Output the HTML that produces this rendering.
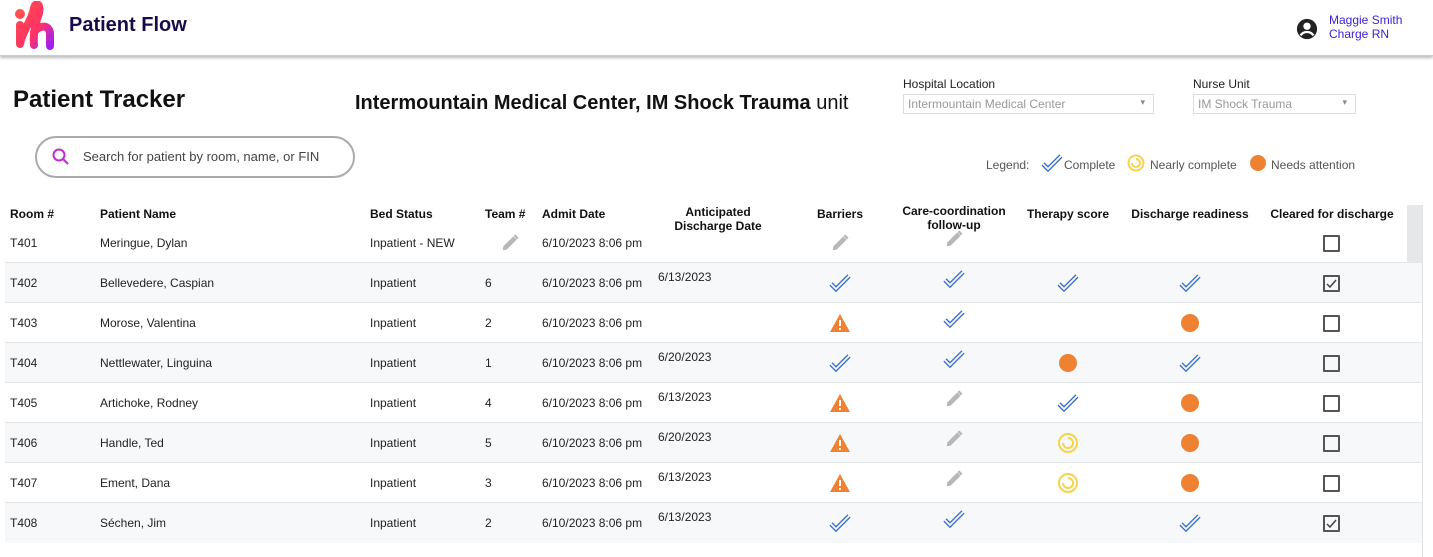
<!DOCTYPE html>
<html><head><meta charset="utf-8"><style>
*{margin:0;padding:0;box-sizing:border-box}
body{width:1433px;height:557px;background:#fff;font-family:"Liberation Sans",Arial,sans-serif;position:relative;overflow:hidden;color:#111}
.a{position:absolute;white-space:nowrap}
.hdr{position:absolute;left:0;top:0;width:1433px;height:56px;background:#fff;border-bottom:1px solid #ccc;box-shadow:0 2px 3px #bbb}
.th{font-size:12px;font-weight:bold;color:#111}
.row{position:absolute;left:5px;width:1417px;height:40px;border-top:1px solid #e3e5e8}
.sh{background:#f7f8fa}
.c{font-size:12px;color:#222}
.sel{position:absolute;height:20px;border:1px solid #ddd;font-size:12px;color:#999;padding:2px 4px}
.sel:after{content:"▾";position:absolute;right:8px;top:2px;font-size:9px;color:#888}
.cb{position:absolute;width:17px;height:17px;border:2px solid #555;border-radius:1px}
</style></head><body>
<div class="hdr"></div>
<svg class="a" style="left:12px;top:1px" width="44" height="50" viewBox="0 0 44 50">
<defs><linearGradient id="g" x1="0" y1="0" x2="1" y2="1"><stop offset="0" stop-color="#ff4a4a"/><stop offset=".6" stop-color="#ff3366"/><stop offset="1" stop-color="#a020f0"/></linearGradient></defs>
<circle cx="8" cy="13" r="5" fill="#ff5050"/>
<path d="M8 24 V43 M8 43 C10 30 20 20 22 7 C24 -1 31 4 25 18 C23 26 21 34 22 44 M22 31 C28 23 38 24 38 33 V45" stroke="url(#g)" stroke-width="8" fill="none" stroke-linecap="round"/>
</svg>
<div class="a" style="left:69px;top:14px;font-size:20px;font-weight:bold;color:#1a0a4a">Patient Flow</div>
<svg class="a" style="left:1296px;top:18px" width="22" height="22" viewBox="0 0 24 24"><circle cx="12" cy="12" r="11" fill="#222"/><circle cx="12" cy="9" r="4" fill="#fff"/><path d="M5 19 C8 14 16 14 19 19" stroke="#fff" stroke-width="2.5" fill="none"/></svg>
<div class="a" style="left:1329px;top:13px;font-size:12px;color:#3a1fd6;line-height:14px">Maggie Smith<br>Charge RN</div>

<div class="a" style="left:13px;top:86px;font-size:24px;font-weight:bold">Patient Tracker</div>
<div class="a" style="left:355px;top:92px;font-size:20px"><b>Intermountain Medical Center, IM Shock Trauma</b> unit</div>
<div class="a" style="left:903px;top:77px;font-size:12px;color:#222">Hospital Location</div>
<div class="sel" style="left:903px;top:94px;width:251px">Intermountain Medical Center</div>
<div class="a" style="left:1193px;top:77px;font-size:12px;color:#222">Nurse Unit</div>
<div class="sel" style="left:1193px;top:94px;width:163px">IM Shock Trauma</div>

<div class="a" style="left:35px;top:136px;width:320px;height:42px;border:2px solid #aaa;border-radius:21px"></div>
<svg class="a" style="left:52px;top:148px" width="18" height="18" viewBox="0 0 18 18"><circle cx="7" cy="7" r="5.5" stroke="#c02ad0" stroke-width="2" fill="none"/><path d="M11 11 L16 16" stroke="#c02ad0" stroke-width="2"/></svg>
<div class="a" style="left:83px;top:149px;font-size:13px;color:#444">Search for patient by room, name, or FIN</div>

<div class="a" style="left:986px;top:158px;font-size:12px;color:#555">Legend:</div>
<svg class="a" style="left:1041px;top:154px" width="22" height="18" viewBox="0 0 22 18"><path d="M2 10 L7 15 L20 2" stroke="#3a6fd0" stroke-width="4.5" fill="none"/><path d="M2 10 L7 15 L20 2" stroke="#fff" stroke-width="1.8" fill="none"/></svg>
<div class="a" style="left:1064px;top:158px;font-size:12px;color:#555">Complete</div>
<svg class="a" style="left:1127px;top:154px" width="18" height="18" viewBox="0 0 18 18"><circle cx="9" cy="9" r="7.5" stroke="#f7d34a" stroke-width="2" fill="none"/><path d="M9 5 A4 4 0 1 1 5 9" stroke="#f7d34a" stroke-width="2" fill="none"/></svg>
<div class="a" style="left:1150px;top:158px;font-size:12px;color:#555">Nearly complete</div>
<div class="a" style="left:1250px;top:155px;width:16px;height:16px;border-radius:50%;background:#ef8133"></div>
<div class="a" style="left:1271px;top:158px;font-size:12px;color:#555">Needs attention</div>

<div class="a" style="left:1407px;top:205px;width:15px;height:83px;background:#e6e7e9"></div>
<div class="a" style="left:1422px;top:205px;width:1px;height:352px;background:#e3e3e3"></div>

<div class="row sh" style="top:262px"></div>
<div class="row" style="top:302px"></div>
<div class="row sh" style="top:342px"></div>
<div class="row" style="top:382px"></div>
<div class="row sh" style="top:422px"></div>
<div class="row" style="top:462px"></div>
<div class="row sh" style="top:502px;height:41px"></div>

<div class="a th" style="left:10px;top:207px">Room #</div>
<div class="a th" style="left:100px;top:207px">Patient Name</div>
<div class="a th" style="left:370px;top:207px">Bed Status</div>
<div class="a th" style="left:485px;top:207px">Team #</div>
<div class="a th" style="left:542px;top:207px">Admit Date</div>
<div class="a th" style="left:668px;top:205px;width:100px;text-align:center;line-height:14px">Anticipated<br>Discharge Date</div>
<div class="a th" style="left:790px;top:207px;width:100px;text-align:center">Barriers</div>
<div class="a th" style="left:894px;top:204px;width:120px;text-align:center;line-height:14px">Care-coordination<br>follow-up</div>
<div class="a th" style="left:1008px;top:207px;width:120px;text-align:center">Therapy score</div>
<div class="a th" style="left:1130px;top:207px;width:120px;text-align:center">Discharge readiness</div>
<div class="a th" style="left:1262px;top:207px;width:140px;text-align:center">Cleared for discharge</div>

<div id="rows"></div>
<script>
const D=[
["T401","Meringue, Dylan","Inpatient - NEW","P","","","p","p","","",0],
["T402","Bellevedere, Caspian","Inpatient","6","6/13/2023","","c","c","c","c",1],
["T403","Morose, Valentina","Inpatient","2","","","w","c","","o",0],
["T404","Nettlewater, Linguina","Inpatient","1","6/20/2023","","c","c","o","c",0],
["T405","Artichoke, Rodney","Inpatient","4","6/13/2023","","w","p","c","o",0],
["T406","Handle, Ted","Inpatient","5","6/20/2023","","w","p","n","o",0],
["T407","Ement, Dana","Inpatient","3","6/13/2023","","w","p","n","o",0],
["T408","Séchen, Jim","Inpatient","2","6/13/2023","","c","c","","c",1]];
function ic(t,cx,cy){
 if(t=="c")return `<svg class="a" style="left:${cx-11}px;top:${cy-9}px" width="22" height="18" viewBox="0 0 22 18"><path d="M2 10 L7 15 L20 2" stroke="#3a6fd0" stroke-width="4.5" fill="none"/><path d="M2 10 L7 15 L20 2" stroke="#fff" stroke-width="1.8" fill="none"/></svg>`;
 if(t=="p")return `<svg class="a" style="left:${cx-10}px;top:${cy-10}px" width="20" height="20" viewBox="0 0 18 18"><path d="M2.5 15.5 L3 12 L12 3 L15 6 L6 15 Z" fill="#b5b7ba"/><path d="M13 2 L16 5" stroke="#b5b7ba" stroke-width="2"/></svg>`;
 if(t=="w")return `<svg class="a" style="left:${cx-11}px;top:${cy-10}px" width="22" height="20" viewBox="0 0 22 20"><path d="M11 1 L21 19 H1 Z" fill="#ef8133"/><rect x="10" y="7" width="2" height="6" fill="#fff"/><rect x="10" y="15" width="2" height="2" fill="#fff"/></svg>`;
 if(t=="o")return `<div class="a" style="left:${cx-9}px;top:${cy-9}px;width:18px;height:18px;border-radius:50%;background:#ef8133"></div>`;
 if(t=="n")return `<svg class="a" style="left:${cx-11}px;top:${cy-11}px" width="22" height="22" viewBox="0 0 22 22"><circle cx="11" cy="11" r="9" stroke="#f7d34a" stroke-width="2" fill="none"/><path d="M11 6 A5 5 0 1 1 6 11" stroke="#f7d34a" stroke-width="2" fill="none"/></svg>`;
 return "";}
let h="";
D.forEach((r,i)=>{const y=i==0?236:276+(i-1)*40;const cy=y+7;
 h+=`<div class="a c" style="left:10px;top:${y}px">${r[0]}</div><div class="a c" style="left:100px;top:${y}px">${r[1]}</div><div class="a c" style="left:370px;top:${y}px">${r[2]}</div>`;
 if(r[3]=="P")h+=ic("p",510,cy);else h+=`<div class="a c" style="left:485px;top:${y}px">${r[3]}</div>`;
 h+=`<div class="a c" style="left:542px;top:${y}px">6/10/2023 8:06 pm</div>`;
 if(r[4])h+=`<div class="a c" style="left:658px;top:${y-6}px">${r[4]}</div>`;
 h+=ic(r[6],840,cy)+ic(r[7],954,cy-4)+ic(r[8],1068,cy)+ic(r[9],1190,cy);
 h+=`<div class="cb" style="left:1323px;top:${cy-8}px"></div>`;
 if(r[10])h+=`<svg class="a" style="left:1325px;top:${cy-6}px" width="13" height="13" viewBox="0 0 13 13"><path d="M2 7 L5 10 L11 3" stroke="#444" stroke-width="1.5" fill="none"/></svg>`;
});
document.getElementById("rows").innerHTML=h;
</script>
</body></html>
